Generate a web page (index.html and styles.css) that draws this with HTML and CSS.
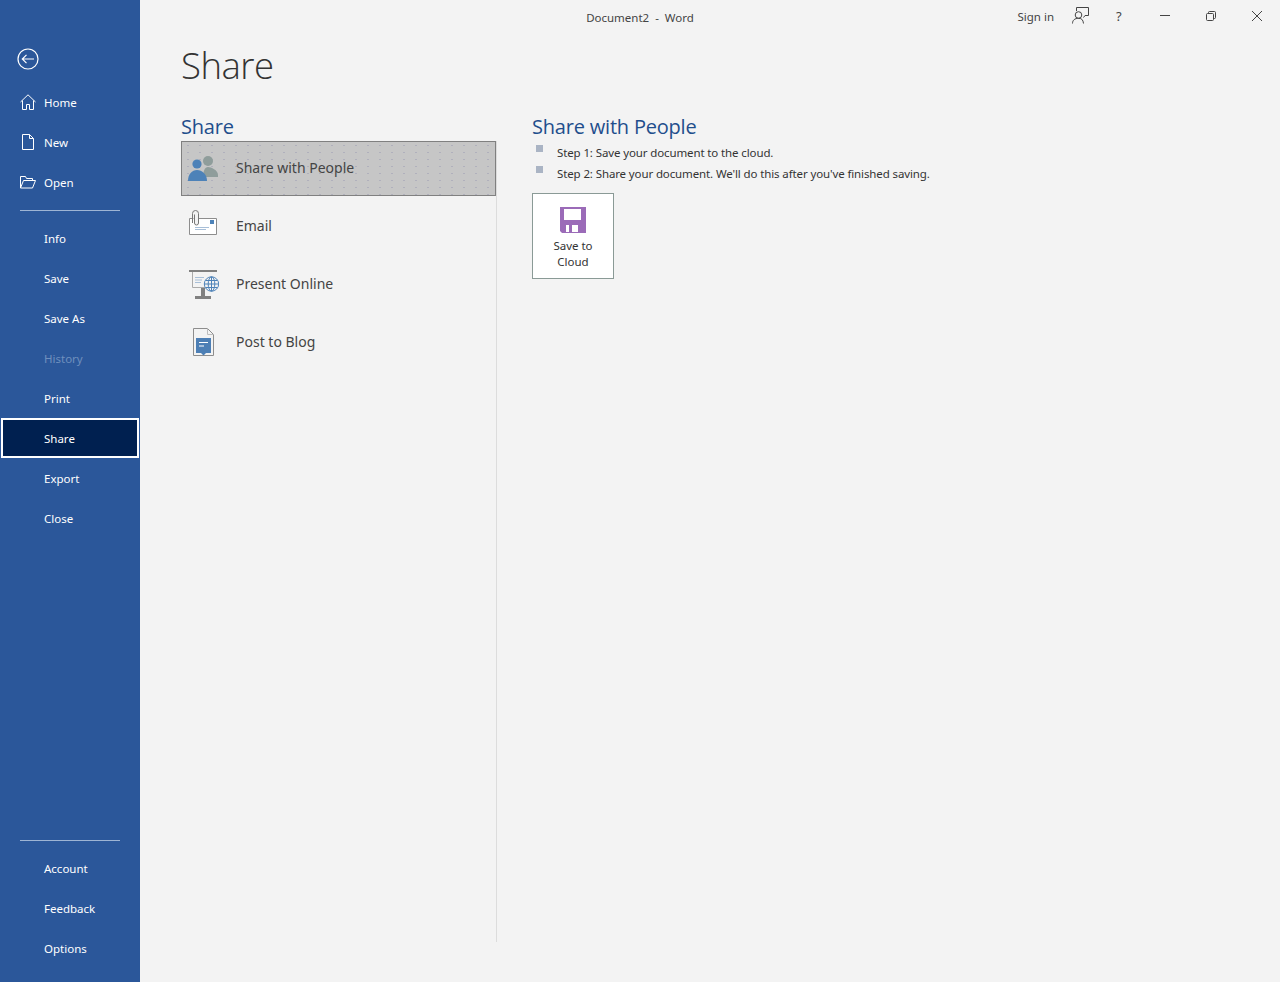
FILE: index.html
```html
<!DOCTYPE html>
<html lang="en">
<head>
<meta charset="utf-8">
<title>Document2 - Word</title>
<link rel="stylesheet" href="styles.css">
</head>
<body>
<div class="app">
  <aside class="sidebar">
    <div class="back">
      <svg width="22" height="22" viewBox="0 0 22 22" fill="none" stroke="#fff" stroke-width="1.2"><circle cx="11" cy="11" r="10"/><path d="M5.500 11H17M9.500 6.800 5.300 11l4.200 4.200"/></svg>
    </div>
    <nav class="nav-top">
      <a class="nav-item"><svg class="nav-icon" width="16" height="16" viewBox="0 0 16 16" fill="none" stroke="#fff"><path d="M.5 8 8 .8 15.500 8M2.500 6.500v9h4v-5h3v5h4v-9"/></svg>Home</a>
      <a class="nav-item"><svg class="nav-icon" width="16" height="16" viewBox="0 0 16 16" fill="none" stroke="#fff"><path d="M2.500.5h7l4 4v11h-11zM9.500.5v4h4"/></svg>New</a>
      <a class="nav-item"><svg class="nav-icon" width="16" height="16" viewBox="0 0 16 16" fill="none" stroke="#fff"><path d="M.5 14V2.500h5l1 2h6v2M.5 14l3-7.500h12L12.500 14z"/></svg>Open</a>
    </nav>
    <hr class="nav-rule">
    <nav class="nav-mid">
      <a class="nav-item">Info</a>
      <a class="nav-item">Save</a>
      <a class="nav-item">Save As</a>
      <a class="nav-item is-disabled">History</a>
      <a class="nav-item">Print</a>
      <a class="nav-item is-active">Share</a>
      <a class="nav-item">Export</a>
      <a class="nav-item">Close</a>
    </nav>
    <div class="nav-bottom">
      <hr class="nav-rule">
      <nav class="nav-end">
        <a class="nav-item">Account</a>
        <a class="nav-item">Feedback</a>
        <a class="nav-item">Options</a>
      </nav>
    </div>
  </aside>
  <main class="main">
    <header class="titlebar">
      <div class="doc-title">Document2&nbsp; -&nbsp; Word</div>
      <div class="win-controls">
        <span class="signin">Sign in</span>
        <svg class="ctl-feedback" width="17" height="17" viewBox="0 0 17 17" fill="none" stroke="#444"><path d="M4.500 4V.5h12v8h-3.500l-1.500 2"/><circle cx="6.500" cy="8" r="3.300"/><path d="M.5 16.500c0-3.500 2.500-5.200 6-5.200s4.500 1.700 5 5.200"/></svg>
        <span class="ctl-help">?</span>
        <svg class="ctl-min" width="10" height="10" viewBox="0 0 10 10" stroke="#444"><path d="M0 4.500h10"/></svg>
        <svg class="ctl-restore" width="10" height="10" viewBox="0 0 10 10" fill="none" stroke="#444"><rect x=".5" y="2.500" width="7" height="7" rx="1"/><path d="M2.500 2.500V1.500a1 1 0 0 1 1-1h5a1 1 0 0 1 1 1v5a1 1 0 0 1-1 1h-1"/></svg>
        <svg class="ctl-close" width="10" height="10" viewBox="0 0 10 10" stroke="#444"><path d="M0 0l10 10M10 0 0 10"/></svg>
      </div>
    </header>
    <h1 class="page-title">Share</h1>
    <div class="columns">
      <section class="col-left">
        <h2 class="section-title">Share</h2>
        <ul class="share-list">
          <li class="share-item is-selected">
            <svg class="share-icon" width="32" height="32" viewBox="0 0 32 32"><circle cx="21" cy="8" r="5" fill="#8f9d9b"/><path d="M16 24c0-6 2-10 5-10s10 3 10 8v2z" fill="#8f9d9b"/><circle cx="10" cy="11" r="4.600" fill="#4d82b8"/><path d="M1 28c0-7 4-11 9-11s10 4 10 11z" fill="#4d82b8"/></svg>
            <span class="share-label">Share with People</span>
          </li>
          <li class="share-item">
            <svg class="share-icon" width="32" height="32" viewBox="0 0 32 32" fill="none"><path d="M2.500 8.500h27v16h-27z" fill="#fff" stroke="#8d8d8d"/><path d="M8 17.500h14M8 19.500h11" stroke="#a8bfd8"/><rect x="23" y="10" width="4" height="4" fill="#4d82b8"/><path d="M5.500 13V3.500a3 3 0 0 1 6 0V13a2 2 0 0 1-4 0V4.500" stroke="#777" fill="#f3f3f3"/></svg>
            <span class="share-label">Email</span>
          </li>
          <li class="share-item">
            <svg class="share-icon" width="32" height="32" viewBox="0 0 32 32" fill="none"><path d="M2 3h28" stroke="#808080" stroke-width="2"/><path d="M5.500 4v15.500h13" stroke="#aaa"/><path d="M8 9.500h9M8 12h7M8 14.500h6" stroke="#a8bfd8"/><rect x="14" y="20" width="4" height="8" fill="#808080"/><path d="M8 28h16v3H8z" fill="#808080"/><circle cx="24.500" cy="16" r="7.200" fill="#f3f3f3" stroke="#4d82b8"/><path d="M17.500 16h14M24.500 9v14M19 12.500h11M19 19.500h11" stroke="#4d82b8"/><ellipse cx="24.500" cy="16" rx="3.300" ry="7.200" stroke="#4d82b8"/></svg>
            <span class="share-label">Present Online</span>
          </li>
          <li class="share-item">
            <svg class="share-icon" width="32" height="32" viewBox="0 0 32 32" fill="none"><path d="M6.500 2.500h14l6 6v21h-20z" fill="#f3f3f3" stroke="#8d8d8d"/><path d="M20.500 2.500v6h6" stroke="#bdbdbd"/><path d="M9 12h15v15h-5l-2.500 2.500L14 27H9z" fill="#4d7fb5"/><path d="M12 16.500h9M12 20h5" stroke="#fff"/></svg>
            <span class="share-label">Post to Blog</span>
          </li>
        </ul>
      </section>
      <section class="col-right">
        <h2 class="section-title">Share with People</h2>
        <ul class="steps">
          <li>Step 1: Save your document to the cloud.</li>
          <li>Step 2: Share your document. We'll do this after you've finished saving.</li>
        </ul>
        <button class="cloud-btn" type="button">
          <svg width="26" height="26" viewBox="0 0 26 26"><path d="M0 0h26v26H2l-2-2z" fill="#9b6bb8"/><path d="M4 2h17v11H4z" fill="#fff"/><path d="M6 18h12v7H6z" fill="#fff"/><path d="M9 18h3v7H9z" fill="#9b6bb8"/></svg>
          <span class="cloud-label">Save to<br>Cloud</span>
        </button>
      </section>
    </div>
  </main>
</div>
</body>
</html>
```
FILE: styles.css
```css
* { box-sizing: border-box; }
html, body { margin: 0; padding: 0; }
body {
  width: 1280px;
  height: 982px;
  overflow: hidden;
  background: #f3f3f3;
  font-family: "Noto Sans", "Open Sans", sans-serif;
  color: #333;
}
.app { display: flex; height: 982px; }

.sidebar {
  width: 140px;
  flex: none;
  background: #2b579a;
  color: #fff;
  display: flex;
  flex-direction: column;
  padding-top: 48px;
}
.back { height: 22px; margin-left: 17px; margin-bottom: 12px; display: flex; }
.nav-item {
  display: flex;
  align-items: center;
  height: 40px;
  padding-left: 44px;
  font-size: 11.500px;
  position: relative;
  color: #fff;
}
.nav-icon { position: absolute; left: 20px; top: 12px; }
.nav-rule {
  width: 100px;
  height: 1px;
  margin: 8px 20px 7px;
  border: 0;
  background: #9db4d4;
}
.nav-item.is-disabled { color: #6f8fbd; }
.nav-item.is-active {
  background: #002050;
  border: 2px solid #fff;
  margin: 0 1px;
  padding-left: 41px;
}
.nav-bottom { margin-top: auto; padding-bottom: 14px; }

.main { flex: 1; display: flex; flex-direction: column; min-width: 0; }
.titlebar { height: 34px; padding-right: 140px; position: relative; display: flex; justify-content: center; align-items: center; font-size: 11.500px; }
.doc-title { color: #444; }
.win-controls {
  position: absolute;
  top: 0;
  right: 18px;
  height: 33px;
  display: flex;
  align-items: center;
  color: #444;
}
.signin { margin-right: 18px; }
.ctl-feedback { margin-right: 27px; margin-top: -3px; }
.ctl-help { font-size: 13px; margin-right: 36px; width: 8px; margin-top: -1px; }
.ctl-min { margin-right: 36px; margin-top: -2px; }
.ctl-restore { margin-right: 36px; margin-top: -1px; }
.ctl-close { margin-top: -1px; }

.page-title {
  margin: 5px 0 0 41px;
  font-size: 36.500px;
  line-height: 52px;
  font-weight: 300;
  font-family: "Open Sans", "Noto Sans", sans-serif;
  color: #333;
  letter-spacing: -0.500px;
}
.columns { display: flex; flex: 1; margin-left: 41px; padding-top: 24px; padding-bottom: 40px; }
.col-left { width: 316px; flex: none; display: flex; flex-direction: column; }
.col-right { margin-left: 35px; }
.section-title {
  margin: 0 0 2px;
  font-size: 20px;
  line-height: 24px;
  font-weight: 400;
  color: #1f4e8c;
  font-family: "Open Sans", "Noto Sans", sans-serif;
  letter-spacing: -0.200px;
}
.share-list { list-style: none; margin: 0; padding: 0; width: 316px; flex: 1; border-right: 1px solid #dcdcdc; }
.share-item {
  height: 58px;
  display: flex;
  align-items: center;
  padding-left: 6px;
  font-size: 14px;
  color: #444;
}
.share-icon { margin-right: 17px; flex: none; }
.share-label { padding-bottom: 2px; }
.share-item.is-selected {
  height: 55px;
  margin-bottom: 1px;
  border: 1px solid #808080;
  padding-left: 5px;
  background-color: #c6c6c6;
  background-image: radial-gradient(circle, #b0b0bc .6px, transparent .8px);
  background-size: 12px 7px;
}
.is-selected .share-label { padding-bottom: 3px; }
.steps { list-style: none; margin: 3px 0 9px; padding: 0; font-size: 11.500px; letter-spacing: -0.120px; color: #333; }
.steps li { height: 21px; line-height: 21px; padding-left: 25px; position: relative; }
.steps li::before {
  content: "";
  position: absolute;
  left: 4px;
  top: 3px;
  width: 7px;
  height: 7px;
  background: #aab4c4;
}
.cloud-btn {
  width: 82px;
  height: 86px;
  background: #fff;
  border: 1px solid #8a9a96;
  padding: 13px 0 0;
  display: flex;
  flex-direction: column;
  align-items: center;
  font-family: inherit;
  font-size: 11.500px;
  line-height: 16px;
  color: #333;
}
.cloud-label { margin-top: 5px; }
```
